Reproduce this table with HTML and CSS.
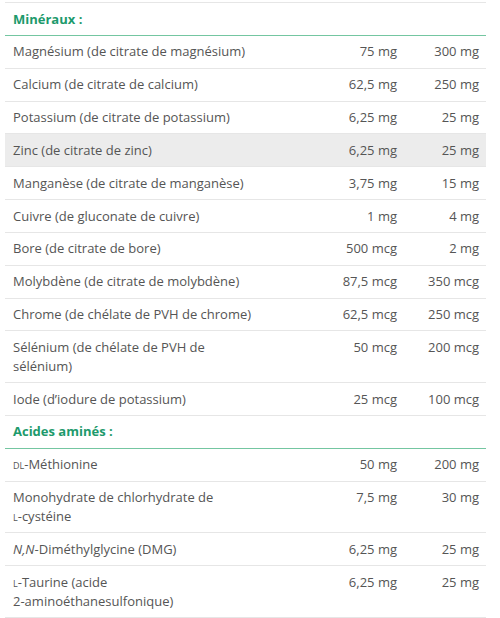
FILE: index.html
```html
<!DOCTYPE html>
<html lang="fr">
<head>
<meta charset="utf-8">
<link rel="stylesheet" href="styles.css">
</head>
<body>
<table class="nutri">
  <colgroup>
    <col class="c-name">
    <col class="c-dose">
    <col class="c-day">
  </colgroup>
  <tbody>
    <tr class="section first"><th colspan="3">Minéraux :</th></tr>
    <tr><td>Magnésium (de citrate de magnésium)</td><td class="num">75 mg</td><td class="num">300 mg</td></tr>
    <tr><td>Calcium (de citrate de calcium)</td><td class="num">62,5 mg</td><td class="num">250 mg</td></tr>
    <tr><td>Potassium (de citrate de potassium)</td><td class="num">6,25 mg</td><td class="num">25 mg</td></tr>
    <tr class="hover"><td>Zinc (de citrate de zinc)</td><td class="num">6,25 mg</td><td class="num">25 mg</td></tr>
    <tr><td>Manganèse (de citrate de manganèse)</td><td class="num">3,75 mg</td><td class="num">15 mg</td></tr>
    <tr><td>Cuivre (de gluconate de cuivre)</td><td class="num">1 mg</td><td class="num">4 mg</td></tr>
    <tr><td>Bore (de citrate de bore)</td><td class="num">500 mcg</td><td class="num">2 mg</td></tr>
    <tr><td>Molybdène (de citrate de molybdène)</td><td class="num">87,5 mcg</td><td class="num">350 mcg</td></tr>
    <tr><td>Chrome (de chélate de PVH de chrome)</td><td class="num">62,5 mcg</td><td class="num">250 mcg</td></tr>
    <tr><td>Sélénium (de chélate de PVH de sélénium)</td><td class="num">50 mcg</td><td class="num">200 mcg</td></tr>
    <tr><td>Iode (d’iodure de potassium)</td><td class="num">25 mcg</td><td class="num">100 mcg</td></tr>
    <tr class="section"><th colspan="3">Acides aminés :</th></tr>
    <tr><td><span class="sc">dl</span>-Méthionine</td><td class="num">50 mg</td><td class="num">200 mg</td></tr>
    <tr><td>Monohydrate de chlorhydrate de <span class="nw"><span class="sc">l</span>-cystéine</span></td><td class="num">7,5 mg</td><td class="num">30 mg</td></tr>
    <tr><td><i>N,N</i>-Diméthylglycine (DMG)</td><td class="num">6,25 mg</td><td class="num">25 mg</td></tr>
    <tr><td><span class="sc">l</span>-Taurine (acide <span class="nw">2-aminoéthanesulfonique)</span></td><td class="num">6,25 mg</td><td class="num">25 mg</td></tr>
  </tbody>
</table>
</body>
</html>
```
FILE: styles.css
```css
html, body {
  margin: 0;
  padding: 0;
  background: #ffffff;
}
body {
  padding: 2px 14px 0 5px;
  font-family: "Open Sans", "Noto Sans", sans-serif;
  font-size: 13px;
  color: #555555;
}
.nutri {
  width: 481px;
  border-collapse: collapse;
  table-layout: fixed;
}
.c-name { width: 260px; }
.c-dose { width: 140px; }
.c-day { width: 81px; }
.nutri td, .nutri th {
  border-bottom: 1px solid #e6e6e6;
  padding: 6.5px 7px 6.5px 8px;
  line-height: 18.85px;
  text-align: left;
  vertical-align: top;
  font-weight: normal;
}
.nutri td.num {
  text-align: right;
  white-space: nowrap;
  padding-right: 8px;
}
.nutri td.num:last-child {
  padding-right: 7px;
}
.nutri tr.section th {
  color: #1d9a6c;
  font-weight: bold;
  border-bottom: 1px solid #74c6a1;
}
.nutri tr.first th {
  border-top: 1px solid #e6e6e6;
}
.nutri tr.hover td {
  background: #ececec;
}
.sc {
  font-variant: small-caps;
}
.nw {
  white-space: nowrap;
}
```
